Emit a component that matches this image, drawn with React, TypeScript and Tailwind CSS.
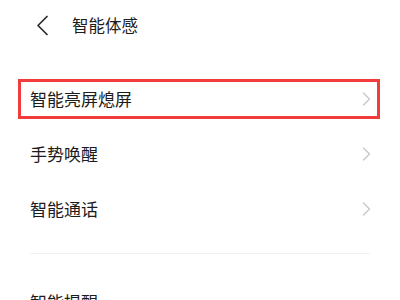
import React from "react";

const font = { fontFamily: '"Noto Sans CJK SC", "Noto Sans", sans-serif' };

function Chevron() {
  return (
    <svg width="9" height="14" viewBox="0 0 9 14" fill="none">
      <polyline points="1.5,1 7.5,7 1.5,13" stroke="#c8c8c8" strokeWidth="1.4" strokeLinecap="round" strokeLinejoin="round" />
    </svg>
  );
}

export default function App() {
  return (
    <div className="w-[400px] h-[300px] overflow-hidden bg-white text-[#1c1c1c]" style={font}>
      {/* 顶部标题栏 */}
      <div className="h-[50px] flex items-center">
        <svg className="ml-[36px]" width="13" height="21" viewBox="0 0 13 21" fill="none">
          <polyline points="11,1.5 2,10.5 11,19.5" stroke="#2a2a2a" strokeWidth="1.7" strokeLinecap="round" strokeLinejoin="round" />
        </svg>
        <span className="ml-[23px] text-[16.5px] leading-none">智能体感</span>
      </div>

      <div className="h-[21px]" />

      {/* 列表 */}
      <div className="h-[55px] flex items-center">
        <div className="ml-[18px] mr-[20px] flex-1 h-[40px] border-[3px] border-[#f23c3c] flex items-center justify-between pl-[9px] pr-[6px]">
          <span className="text-[17px] leading-none">智能亮屏熄屏</span>
          <Chevron />
        </div>
      </div>
      <div className="h-[55px] flex items-center justify-between pl-[30px] pr-[29px]">
        <span className="text-[17px] leading-none">手势唤醒</span>
        <Chevron />
      </div>
      <div className="h-[55px] flex items-center justify-between pl-[30px] pr-[29px]">
        <span className="text-[17px] leading-none">智能通话</span>
        <Chevron />
      </div>

      <div className="mt-[17px] mx-[30px] border-t border-[#f0f0f0]" />

      <div className="mt-[39px] pl-[30px] text-[17px] leading-none">智能提醒</div>
    </div>
  );
}
